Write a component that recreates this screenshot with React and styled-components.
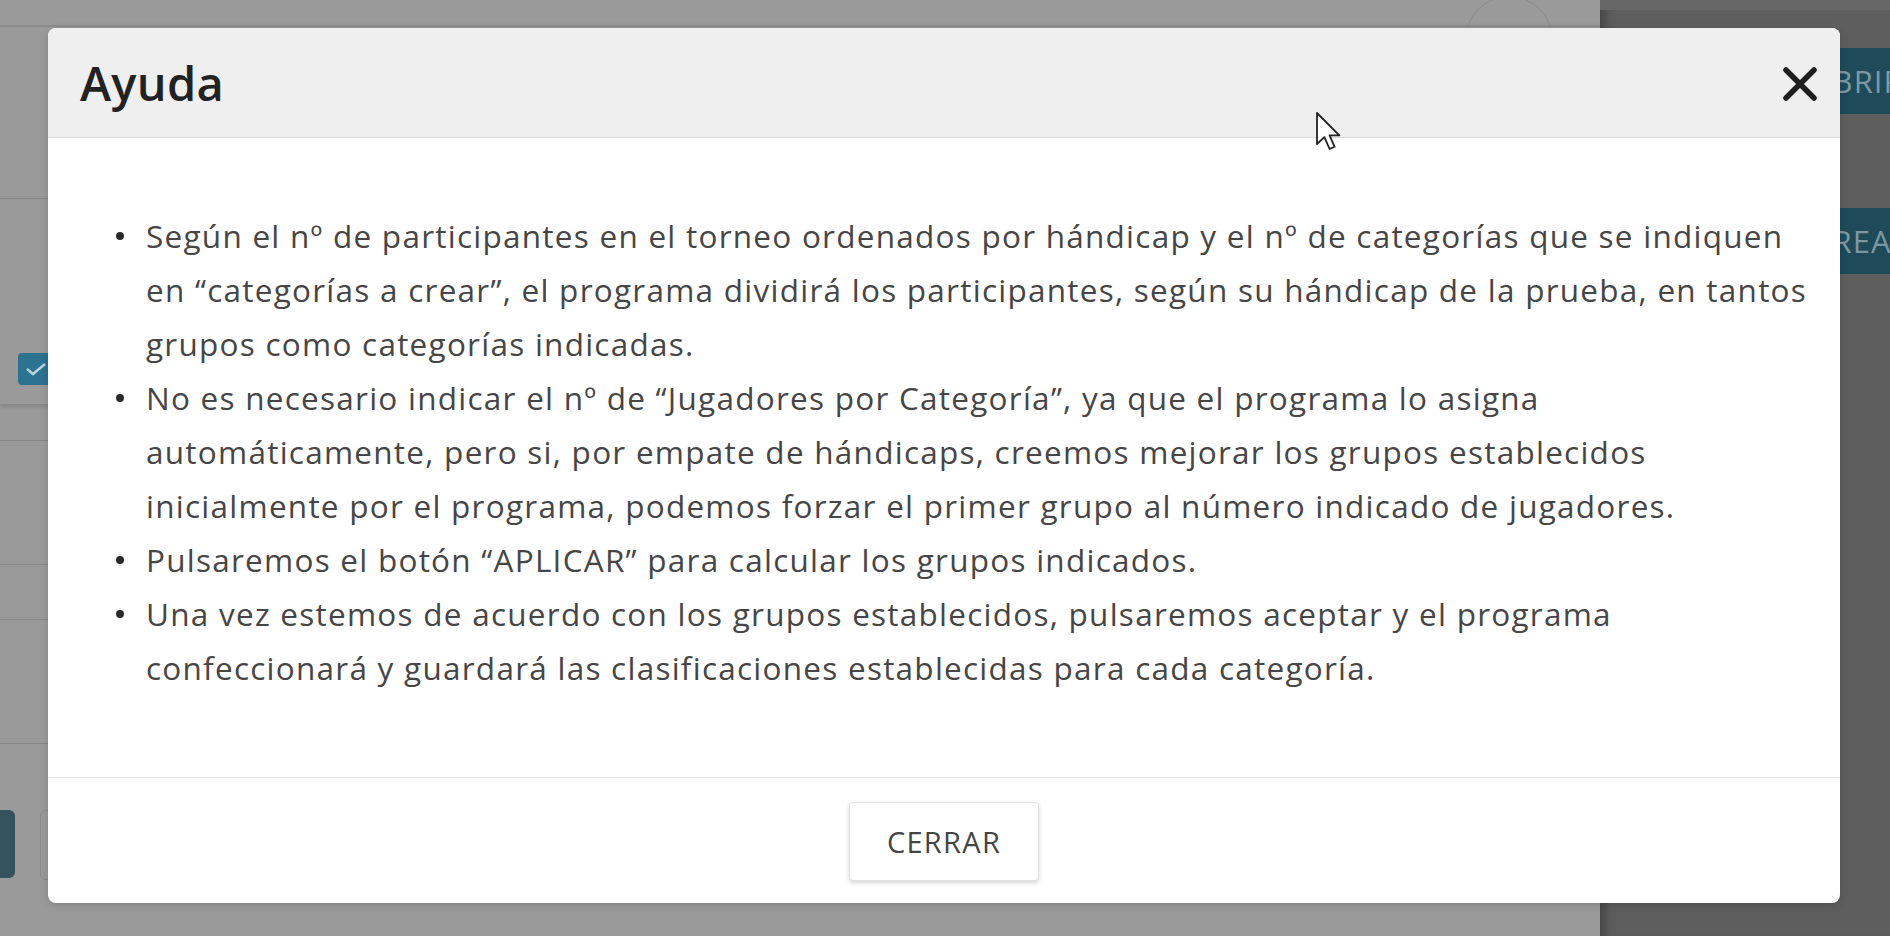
import React from "react";
import styled, { createGlobalStyle } from "styled-components";

const GlobalStyle = createGlobalStyle`
  html, body {
    margin: 0;
    padding: 0;
  }
  body {
    width: 1890px;
    height: 936px;
    overflow: hidden;
    font-family: "Open Sans", "Liberation Sans", sans-serif;
  }
`;

const Screen = styled.div`
  position: relative;
  display: grid;
  grid-template-columns: 1600px 1fr;
  width: 1890px;
  height: 936px;
  overflow: hidden;
`;

/* ---------- page behind the backdrop ---------- */

const Page = styled.div`
  position: relative;
  display: flex;
  flex-direction: column;
  background: #9a9a9a;
`;

const TopBar = styled.div`
  height: 25px;
  border-bottom: 2px solid #8c8c8c;
  flex-shrink: 0;
`;

const Section = styled.div`
  height: ${(p) => p.h}px;
  border-bottom: 1px solid #868686;
  flex-shrink: 0;
`;

const Card = styled.div`
  height: 70px;
  margin-top: 135px;
  display: flex;
  align-items: center;
  padding-left: 18px;
  box-shadow: 0 3px 4px rgba(0, 0, 0, 0.12);
  flex-shrink: 0;
`;

const Checkbox = styled.div`
  width: 36px;
  height: 32px;
  border-radius: 4px;
  background: #2b7391;
  display: flex;
  align-items: center;
  justify-content: center;
`;

const ButtonRow = styled.div`
  display: flex;
  gap: 25px;
  margin-top: 66px;
  margin-left: -60px;
`;

const PageButton = styled.div`
  width: ${(p) => p.w}px;
  height: 68px;
  border-radius: 6px;
  background: ${(p) => (p.dark ? "#34535d" : "transparent")};
  border: ${(p) => (p.dark ? "none" : "1px solid #8a8a8a")};
`;

const FloatingClose = styled.div`
  position: absolute;
  left: 1465px;
  top: -4px;
  width: 86px;
  height: 86px;
  border-radius: 50%;
  border: 1px solid #8b8b8b;
  display: flex;
  align-items: center;
  justify-content: center;
`;

/* ---------- side drawer ---------- */

const Side = styled.div`
  display: flex;
  flex-direction: column;
  background: #5e5e5e;
  box-shadow: inset 14px 0 12px -10px rgba(0, 0, 0, 0.3);
`;

const SideTop = styled.div`
  height: 10px;
  background: #676767;
`;

const SideButton = styled.div`
  margin-top: ${(p) => p.gap}px;
  margin-left: 20px;
  width: 320px;
  height: 66px;
  padding-left: 192px;
  box-sizing: border-box;
  display: flex;
  align-items: center;
  background: #1f4a59;
  color: #7b98a3;
  font-size: 31px;
  letter-spacing: 1px;
`;

/* ---------- modal ---------- */

const Modal = styled.div`
  position: absolute;
  left: 48px;
  top: 28px;
  width: 1792px;
  height: 875px;
  border-radius: 8px;
  background: #fff;
  overflow: hidden;
  display: flex;
  flex-direction: column;
  box-shadow: 0 2px 8px rgba(0, 0, 0, 0.15);
`;

const Header = styled.div`
  height: 109px;
  flex-shrink: 0;
  display: flex;
  align-items: center;
  justify-content: space-between;
  padding: 0 22px 0 32px;
  background: #efefef;
  border-bottom: 1px solid #dddddd;
`;

const Title = styled.h2`
  margin: 0;
  font-size: 47px;
  font-weight: 600;
  color: #222;
  letter-spacing: 0.3px;
`;

const CloseButton = styled.button`
  border: none;
  background: none;
  padding: 0;
  margin-top: 2px;
  display: flex;
  cursor: pointer;
`;

const Body = styled.div`
  flex: 1;
  padding: 71px 12px 0 0;
`;

const List = styled.ul`
  margin: 0;
  padding-left: 98px;
  list-style: none;
`;

const Item = styled.li`
  position: relative;
  font-size: 31.5px;
  line-height: 54px;
  color: #464646;
  letter-spacing: 1.25px;
  white-space: nowrap;

  &::before {
    content: "";
    position: absolute;
    left: -30px;
    top: 23px;
    width: 8px;
    height: 8px;
    border-radius: 50%;
    background: #2a2a2a;
  }
`;

const Footer = styled.div`
  height: 125px;
  flex-shrink: 0;
  display: flex;
  align-items: center;
  justify-content: center;
  border-top: 1px solid #e6e6e6;
`;

const FooterButton = styled.button`
  width: 190px;
  height: 79px;
  margin-top: 2px;
  border: 1px solid #e2e2e2;
  border-radius: 4px;
  background: #fff;
  box-shadow: 0 2px 4px rgba(0, 0, 0, 0.16);
  font-family: "Open Sans", "Liberation Sans", sans-serif;
  font-size: 29px;
  color: #444;
  letter-spacing: 1.3px;
  cursor: pointer;
`;

const Pointer = styled.svg`
  position: absolute;
  left: 1315px;
  top: 111px;
`;

const items = [
  [
    "Según el nº de participantes en el torneo ordenados por hándicap y el nº de categorías que se indiquen",
    "en “categorías a crear”, el programa dividirá los participantes, según su hándicap de la prueba, en tantos",
    "grupos como categorías indicadas.",
  ],
  [
    "No es necesario indicar el nº de “Jugadores por Categoría”, ya que el programa lo asigna",
    "automáticamente, pero si, por empate de hándicaps, creemos mejorar los grupos establecidos",
    "inicialmente por el programa, podemos forzar el primer grupo al número indicado de jugadores.",
  ],
  ["Pulsaremos el botón “APLICAR” para calcular los grupos indicados."],
  [
    "Una vez estemos de acuerdo con los grupos establecidos, pulsaremos aceptar y el programa",
    "confeccionará y guardará las clasificaciones establecidas para cada categoría.",
  ],
];

export default function App() {
  return (
    <>
      <GlobalStyle />
      <Screen>
        <Page>
          <TopBar />
          <Section h={171} />
          <Card>
            <Checkbox>
              <svg width="22" height="14" viewBox="0 0 22 14">
                <path d="M2 7 L8 12 L20 2" fill="none" stroke="#b9d2dc" strokeWidth="2.5" />
              </svg>
            </Checkbox>
          </Card>
          <Section h={36} />
          <Section h={123} />
          <Section h={54} />
          <Section h={123} />
          <ButtonRow>
            <PageButton dark w={75} />
            <PageButton w={200} />
          </ButtonRow>
          <FloatingClose>
            <svg width="24" height="24" viewBox="0 0 24 24">
              <path d="M3 3 L21 21 M21 3 L3 21" stroke="#6f6f6f" strokeWidth="2.5" />
            </svg>
          </FloatingClose>
        </Page>
        <Side>
          <SideTop />
          <SideButton gap={38}>ABRIR</SideButton>
          <SideButton gap={94}>CREAR</SideButton>
        </Side>

        <Modal>
          <Header>
            <Title>Ayuda</Title>
            <CloseButton aria-label="Cerrar">
              <svg width="36" height="34" viewBox="0 0 36 34">
                <path d="M4 3 L32 31 M32 3 L4 31" stroke="#1e1e1e" strokeWidth="5.5" strokeLinecap="round" />
              </svg>
            </CloseButton>
          </Header>
          <Body>
            <List>
              {items.map((lines, i) => (
                <Item key={i}>
                  {lines.map((l, j) => (
                    <React.Fragment key={j}>
                      {l}
                      {j < lines.length - 1 && <br />}
                    </React.Fragment>
                  ))}
                </Item>
              ))}
            </List>
          </Body>
          <Footer>
            <FooterButton>CERRAR</FooterButton>
          </Footer>
        </Modal>

        <Pointer width="28" height="42" viewBox="0 0 14 21">
          <path
            d="M1 1 V16.5 L4.7 13.1 L7.3 19 L9.8 17.9 L7.3 12.2 H12.2 Z"
            fill="#fff"
            stroke="#222"
            strokeWidth="0.9"
            strokeLinejoin="round"
          />
        </Pointer>
      </Screen>
    </>
  );
}
